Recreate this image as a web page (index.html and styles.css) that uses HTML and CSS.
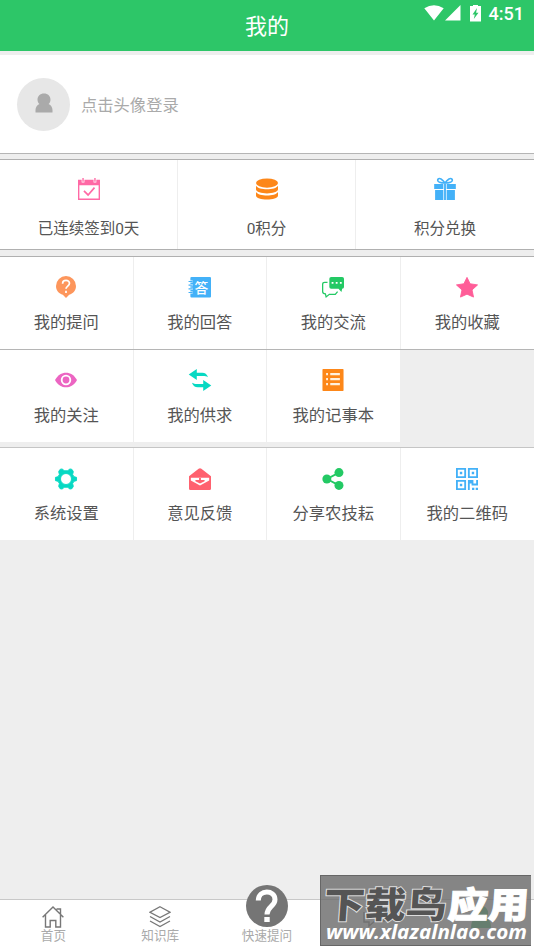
FILE: index.html
```html
<!DOCTYPE html>
<html lang="zh-CN">
<head>
<meta charset="utf-8">
<title>我的</title>
<link rel="stylesheet" href="styles.css">
</head>
<body>
<header class="header">
  <h1>我的</h1>
  <div class="status">
    <svg width="40" height="18" viewBox="0 0 40 18" fill="#fff"><path d="M.3 3.2Q10 -2.5 19.7 3.2L10 15.5ZM21 15.5 36.500 0V15.500Z"/></svg>
    <svg class="battery" width="11" height="18" viewBox="0 0 11 18"><path fill="#fff" d="M3 1V0h5v1h3v15.500H0V1Z"/><path fill="#2dc668" d="M7 3 2.500 9.500h2.300L3.800 14 8.500 7.800H6.100Z"/></svg>
    <span class="time">4:51</span>
  </div>
</header>
<main>
  <section class="profile">
    <div class="avatar"><svg width="18" height="20" viewBox="0 0 18 20"><path fill="#aaa" d="M9 .5c4 0 6.500 2.700 6.500 6.300 0 1.700-.8 3.300-1.900 4.300 2.500 1.100 3.900 3.600 3.900 6V19.500H.5v-2.400c0-2.400 1.400-4.900 3.900-6-1.100-1-1.900-2.600-1.900-4.300C2.500 3.200 5 .5 9 .5Z"/></svg></div>
    <span>点击头像登录</span>
  </section>

  <section class="grid stats">
    <div class="cell">
      <svg class="icon" viewBox="0 0 24 24"><path fill="#ff69a5" d="M0 2h4v3h3V2h10v3h3V2h4v22H0ZM1.500 8v14.300h21V8Z" fill-rule="evenodd"/><path d="M5.500 0v4M18.500 0v4" stroke="#ff69a5" stroke-width="1.500"/><path d="m6.500 14 4.500 4.500 7-8" stroke="#ff69a5" stroke-width="1.800" fill="none"/></svg>
      <span>已连续签到0天</span>
    </div>
    <div class="cell">
      <svg class="icon" viewBox="0 0 24 24"><g fill="#fd8719"><ellipse cx="12" cy="5.500" rx="12" ry="5"/><path d="M0 8.500c3 5.200 21 5.200 24 0v3.800c0 6-24 6-24 0ZM0 15.300c3 5.200 21 5.200 24 0v3.700c0 6-24 6-24 0Z"/></g></svg>
      <span>0积分</span>
    </div>
    <div class="cell">
      <svg class="icon" viewBox="0 0 24 24"><g fill="#43b1f8"><path d="M.2 6.500h10v5.500H.2ZM11 6.500h2v17.500h-2ZM13.800 6.500h10v5.500h-10ZM1.200 13h9v11h-9ZM13.800 13h9v11h-9Z"/></g><path d="M12 5.500C8 5.500 3 4.500 4.200 1.500 6 -.7 9 1 12 5.500c3-4.500 6-6.200 7.800-4C21 4.500 16 5.500 12 5.500Z" fill="none" stroke="#43b1f8" stroke-width="1.800"/></svg>
      <span>积分兑换</span>
    </div>
  </section>

  <section class="grid menu">
    <div class="cell">
      <svg class="icon" viewBox="0 0 24 24"><path fill="#fd965c" d="M12 0a10.900 10.900 0 0 1 10.900 10.900c0 5-3.300 8.200-7.400 9.600L12 24l-3.500-3.500C4.400 19.100 1.100 15.900 1.100 10.900A10.900 10.900 0 0 1 12 0Z"/><path d="M8.300 8.400C8.300 3.500 15.800 3.800 15.800 8c0 3-3.800 3-3.800 6M12 16v2.500" fill="none" stroke="#fff" stroke-width="1.900"/></svg>
      <span>我的提问</span>
    </div>
    <div class="cell">
      <svg class="icon" viewBox="0 0 24 24"><rect x="1.500" y="1" width="22.500" height="22.500" rx="1.200" fill="#43b1f8"/><path d="M-.5 6h4.500M-.5 10h4.500M-.5 14h4.500M-.5 18h4.500" stroke="#fff" stroke-width="2.400"/><path d="M-.5 6h4.500M-.5 10h4.500M-.5 14h4.500M-.5 18h4.500" stroke="#43b1f8" stroke-width="1.200"/><text class="answer" x="13.500" y="18" text-anchor="middle">答</text></svg>
      <span>我的回答</span>
    </div>
    <div class="cell">
      <svg class="icon" viewBox="0 0 24 24"><path fill="#23c964" d="M10 1h12q2 0 2 2v9q0 2-2 2l-.8 3.500L18 14h-8q-2 0-2-2V3q0-2 2-2Z"/><path d="M6 7H3Q.7 7 .7 9v8q0 2.500 3 2.500l.8 3.300L8 20h6.500l2.500-3" fill="none" stroke="#23c964" stroke-width="1.400"/><path d="M10.500 7.500h2M15 7.500h2M19.500 7.500h2" stroke="#fff" stroke-width="2"/></svg>
      <span>我的交流</span>
    </div>
    <div class="cell">
      <svg class="icon" viewBox="0 0 24 24"><path fill="#ff5d98" stroke="#ff5d98" stroke-linejoin="round" d="m12 1.500 3.400 7 8.100 1.200-6 5.500 1.600 7.800L12 19.800 4.900 23l1.600-7.800-6-5.500 8.100-1.200Z"/></svg>
      <span>我的收藏</span>
    </div>
    <div class="cell">
      <svg class="icon" viewBox="0 0 24 24"><path fill="#ec65c2" d="M0 12C5.500 1.300 18.500 1.300 24 12 18.500 22.700 5.500 22.700 0 12Z"/><circle cx="12" cy="12" r="4.700" fill="#ec65c2" stroke="#fff" stroke-width="2"/></svg>
      <span>我的关注</span>
    </div>
    <div class="cell">
      <svg class="icon" viewBox="0 0 24 24"><g fill="#07d9c3"><path d="M-.3 6 8.500 0v4h6c3 0 5 1.500 6.300 5-2-1.100-3-1.300-5.800-1.300H8.500V12Z"/><path d="M24.300 18 15.500 24v-4h-6c-3 0-5-1.500-6.300-5 2 1.100 3 1.300 5.800 1.300h6.500V12Z"/></g></svg>
      <span>我的供求</span>
    </div>
    <div class="cell">
      <svg class="icon" viewBox="0 0 24 24"><rect x=".5" y="0" width="23" height="24" rx=".8" fill="#fd8719"/><path d="M4.500 5.500h2M9 5.500h10.500M4.500 11h2M9 11h10.500M4.500 16.500h2M9 16.500h10.500" stroke="#fff1df" stroke-width="2.400"/></svg>
      <span>我的记事本</span>
    </div>
  </section>

  <section class="grid menu tools">
    <div class="cell">
      <svg class="icon" viewBox="0 0 24 24"><path fill="#07d9c3" fill-rule="evenodd" stroke="#07d9c3" stroke-linejoin="round" d="M5.500 1.500 8 1l2 2h4l2-2 2.500.5 1.500 2.500-.8 3 1.500 2.500 2.800.7v3.600l-2.800.7-1.500 2.500.8 3-1.500 2.500L16 23l-2-2h-4l-2 2-2.500-.5L4 20l.8-3-1.500-2.500-2.800-.7v-3.600l2.800-.7L4.800 7 4 4ZM12 6a6 6 0 1 0 0 12 6 6 0 0 0 0-12Z"/></svg>
      <span>系统设置</span>
    </div>
    <div class="cell">
      <svg class="icon" viewBox="0 0 24 24"><path fill="#ff616f" d="M0 9 10.500.8Q12 -.4 13.500.8L24 9v13.500q0 1.500-1.500 1.500h-21Q0 24 0 22.500Z"/><path fill="#fff" d="M2 10.500h20V13.500L12 19 2 13.500Z"/><path fill="#ff616f" d="M11 11h2v2h4v1.500l-5 2.500-5-2.500V13h4Z"/></svg>
      <span>意见反馈</span>
    </div>
    <div class="cell">
      <svg class="icon" viewBox="0 0 24 24"><path d="M18.500 5 5.500 12l13 7" fill="none" stroke="#23c964" stroke-width="2"/><g fill="#23c964"><circle cx="18.500" cy="5" r="4.900"/><circle cx="5.300" cy="12" r="4.900"/><circle cx="18.500" cy="19" r="4.900"/></g></svg>
      <span>分享农技耘</span>
    </div>
    <div class="cell">
      <svg class="icon" viewBox="0 0 24 24"><g fill="none" stroke="#43b1f8" stroke-width="2"><path d="M1 1h9v9H1ZM14 1h9v9h-9ZM1 14h9v9H1Z"/></g><path fill="#43b1f8" d="M4.200 4.200h2.600v2.600H4.200ZM17.200 4.200h2.600v2.600h-2.600ZM4.200 17.200h2.600v2.600H4.200ZM13 13h6v4h3v-4h2v6h-7v-2h-2v7h-2ZM17.500 21.500H20V24h-2.500ZM21.500 21.500H24V24h-2.500Z"/></svg>
      <span>我的二维码</span>
    </div>
  </section>
</main>
<nav class="tabs">
  <div class="tab">
    <svg width="22" height="22" viewBox="0 0 22 22" fill="none" stroke="#777" stroke-width="1.400"><path d="M.6 11.200 11 1l10.400 10.200M3.500 9v12h4.700v-6.500h5.600V21h4.700V9M14.500 3h4v5"/></svg>
    <span>首页</span>
  </div>
  <div class="tab">
    <svg width="22" height="22" viewBox="0 0 22 22" fill="none" stroke="#777" stroke-width="1.300"><path d="m11 .8 10 5.400-10 5.400L1 6.200ZM1 10.500l10 5.500 10-5.500M1 15l10 5.500L21 15"/></svg>
    <span>知识库</span>
  </div>
  <div class="tab">
    <svg class="ask" width="42" height="42" viewBox="0 0 42 42"><circle cx="21" cy="21" r="21" fill="#757575"/><path d="M12.300 15.500C12.500 4 29 4.500 29 14.500c0 7-8 7-8 15" fill="none" stroke="#fff" stroke-width="5"/><path fill="#fff" d="M18.300 32h5.400v5h-5.400z"/></svg>
    <span>快速提问</span>
  </div>
  <div class="tab"><svg width="22" height="22" viewBox="0 0 22 22" fill="none" stroke="#777" stroke-width="1.500"><path d="M7 1h14v14H12l-6 5v-4H1V6"/></svg></div>
  <div class="tab"><svg width="22" height="36" viewBox="0 0 22 36" fill="#2dc668"><path d="M11 0a7 7 0 0 1 5 12q5 2 5 10H1q0-8 5-10a7 7 0 0 1 5-12Z"/></svg></div>
</nav>
<aside class="watermark">
  <svg width="210" height="69" viewBox="0 0 210 69">
    <g transform="skewX(-4)">
      <text class="brand" x="5" y="42" textLength="123" lengthAdjust="spacingAndGlyphs">下载鸟</text>
      <text class="brand light" x="129" y="42" textLength="81" lengthAdjust="spacingAndGlyphs">应用</text>
    </g>
    <text class="url" x="5" y="63" textLength="201" lengthAdjust="spacingAndGlyphs">www.xlazalnlao.com</text>
  </svg>
</aside>
</body>
</html>
```
FILE: styles.css
```css
* { box-sizing: border-box; }
body {
  margin: 0;
  height: 950px;
  display: flex;
  flex-direction: column;
  overflow: hidden;
  position: relative;
  background: #eee;
  color: #555;
  font-family: Roboto, "Noto Sans CJK SC", sans-serif;
}
svg { display: block; flex: none; }
.header {
  position: relative;
  height: 51px;
  background: #2dc668;
  color: #fff;
  text-align: center;
}
h1 { margin: 0; font-size: 22px; font-weight: 400; line-height: 53px; }
.status {
  position: absolute;
  top: 4px;
  right: 10px;
  display: flex;
  align-items: flex-start;
}
.status svg { margin-top: 1px; }
.battery { margin: 0 8px 0 6px; }
.time { font-size: 18px; font-weight: 500; line-height: 20px; }
main { flex: 1; }
.profile {
  height: 99px;
  margin-top: 4px;
  padding-left: 17px;
  display: flex;
  align-items: center;
  gap: 11px;
  background: #fff;
  border-bottom: 1px solid #b5b5b5;
  color: #aaa;
  font-size: 16.3px;
}
.avatar {
  width: 53px;
  height: 53px;
  border-radius: 50%;
  background: #e7e7e7;
  display: flex;
  align-items: center;
  justify-content: center;
  padding-bottom: 3px;
}
.grid { display: grid; border-top: 1px solid #b0b0b0; }
.cell {
  display: flex;
  flex-direction: column;
  align-items: center;
  background: #fff;
  border-right: 1px solid #eee;
  white-space: nowrap;
}
.cell span { line-height: 24px; }
.icon { width: 22px; height: 22px; overflow: visible; }
.stats {
  grid-template-columns: repeat(3, 1fr);
  height: 91px;
  margin-top: 5px;
  border-bottom: 1px solid #b0b0b0;
  font-size: 15.5px;
}
.stats .cell { padding-top: 18px; gap: 17px; }
.stats .cell:last-child, .menu .cell:nth-child(4) { border-right: 0; }
.menu {
  grid-template-columns: repeat(4, 1fr);
  grid-template-rows: 92px;
  margin-top: 6px;
  font-size: 16.3px;
}
.menu .cell { padding-top: 19px; gap: 13px; }
.menu:not(.tools) {
  grid-template-rows: 92px 92px;
  row-gap: 1px;
  background: linear-gradient(#b5b5b5, #b5b5b5) 0 92px / 100% 1px no-repeat;
}
.tools { margin-top: 5px; border-color: #c5c5c5; }
.tools .cell { padding-top: 20px; }
.tools .icon { margin-bottom: -1px; }
.answer { font: 500 15px "Noto Sans CJK SC", sans-serif; fill: #fff; }
.tabs {
  height: 51px;
  display: grid;
  grid-template-columns: repeat(5, 1fr);
  background: #fff;
  border-top: 1px solid #c8c8c8;
}
.tab {
  display: flex;
  flex-direction: column;
  align-items: center;
  padding-top: 6px;
  color: #aaa;
  font-size: 12.6px;
}
.tab span { line-height: 16px; }
.tab .ask { margin-top: -21px; margin-bottom: 1px; }
.watermark {
  position: absolute;
  left: 320px;
  top: 875px;
  width: 211px;
  height: 71px;
  background: rgba(112, 112, 112, .84);
  border: solid #666;
  border-width: 1px 0 1px 1px;
}
.brand {
  font: 900 36px "Noto Sans CJK SC", sans-serif;
  fill: #555;
  stroke: #ddd;
  stroke-width: 2px;
  paint-order: stroke;
}
.light { fill: #fff; stroke: #fff; stroke-width: 1px; }
.url { font: italic 700 19px "Noto Sans", sans-serif; fill: #fff; }
```
